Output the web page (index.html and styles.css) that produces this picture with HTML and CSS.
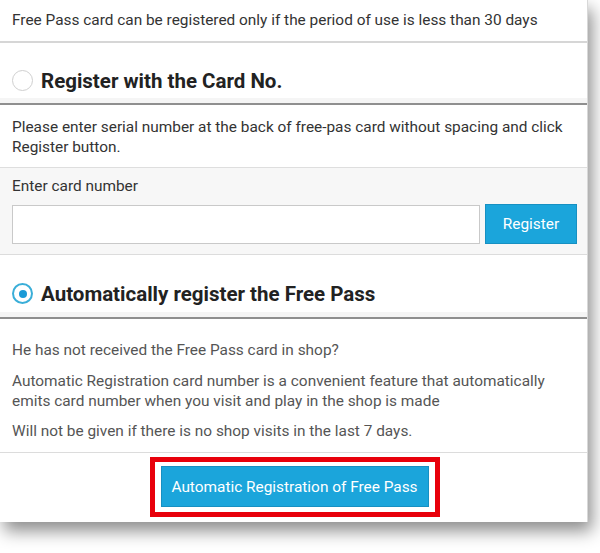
FILE: index.html
```html
<!DOCTYPE html>
<html>
<head>
<meta charset="utf-8">
<link rel="stylesheet" href="styles.css">
</head>
<body>
<div class="card">
  <div class="notice">Free Pass card can be registered only if the period of use is less than 30 days</div>
  <div class="heading">
    <span class="radio"></span>
    <h2>Register with the Card No.</h2>
  </div>
  <div class="desc">Please enter serial number at the back of free-pas card without spacing and click Register button.</div>
  <div class="form">
    <label class="label">Enter card number</label>
    <div class="row">
      <input class="input" type="text">
      <button class="btn btn-reg">Register</button>
    </div>
  </div>
  <div class="heading heading-2">
    <span class="radio checked"></span>
    <h2>Automatically register the Free Pass</h2>
  </div>
  <div class="info">
    <p>He has not received the Free Pass card in shop?</p>
    <p>Automatic Registration card number is a convenient feature that automatically emits card number when you visit and play in the shop is made</p>
    <p>Will not be given if there is no shop visits in the last 7 days.</p>
  </div>
  <div class="actions">
    <div class="highlight">
      <button class="btn btn-auto">Automatic Registration of Free Pass</button>
    </div>
  </div>
</div>
</body>
</html>
```
FILE: styles.css
```css
html, body {
  margin: 0;
  padding: 0;
  background: #ffffff;
}
body {
  font-family: Roboto, "Liberation Sans", sans-serif;
  width: 600px;
  height: 553px;
  overflow: hidden;
}
.card {
  width: 588px;
  height: 522px;
  background: #fff;
  box-shadow: 4px 9px 16px rgba(0,0,0,0.45);
  border-right: 1px solid #d8d8d8;
  box-sizing: border-box;
}
.notice {
  font-size: 15.4px;
  line-height: 20px;
  color: #333;
  padding: 10px 12px 11px;
  border-bottom: 2px solid #d6d6d6;
}
.heading {
  display: flex;
  align-items: center;
  gap: 8px;
  height: 59px;
  padding: 0 12px;
  padding-top: 1px;
  box-sizing: content-box;
  border-bottom: 2px solid #8f8f8f;
  box-shadow: inset 0 -5px 0 #f5f5f5;
}
.heading h2 {
  margin: 0;
  font-size: 20.5px;
  font-weight: 700;
  color: #222;
  line-height: 24px;
  padding-top: 14px;
}
.radio {
  width: 21px;
  height: 21px;
  border-radius: 50%;
  border: 1px solid #cfcfcf;
  box-sizing: border-box;
  margin-top: 14px;
  flex: none;
  display: flex;
  align-items: center;
  justify-content: center;
}
.radio.checked {
  border: 2px solid #3aaed8;
}
.radio.checked::after {
  content: "";
  width: 8px;
  height: 8px;
  border-radius: 50%;
  background: #1a9ad6;
}
.desc {
  font-size: 15.4px;
  line-height: 20px;
  color: #333;
  padding: 12px 12px 10px;
  border-bottom: 1px solid #dedede;
}
.form {
  background: #f7f7f7;
  padding: 8px 10px 10px 12px;
  border-bottom: 1px solid #dcdcdc;
}
.label {
  display: block;
  font-size: 15.4px;
  line-height: 20px;
  color: #333;
  margin-bottom: 8px;
}
.row {
  display: flex;
  align-items: flex-start;
  gap: 5px;
}
.input {
  width: 468px;
  height: 39px;
  box-sizing: border-box;
  border: 1px solid #c9c9c9;
  background: #fff;
  margin: 1px 0 0;
  padding: 0 8px;
}
.btn {
  font-family: Roboto, "Liberation Sans", sans-serif;
  font-size: 15.4px;
  color: #fff;
  background: #1ba5db;
  border: 1px solid #1790c2;
  cursor: pointer;
  padding: 0;
}
.btn-reg {
  width: 92px;
  height: 40px;
}
.heading-2 {
  height: 61px;
}
.info {
  padding: 21px 12px 11px;
  color: #555;
  font-size: 15.4px;
  line-height: 20px;
  border-bottom: 1px solid #dcdcdc;
}
.info p {
  margin: 0 0 11px;
}
.info p:nth-child(2) {
  margin-bottom: 10px;
}
.info p:last-child {
  margin-bottom: 0;
}
.actions {
  display: flex;
  justify-content: center;
  padding: 4px 0 5px;
}
.highlight {
  border: 5px solid #e8000b;
  padding: 4px 6px 5px;
  margin-left: 2px;
}
.btn-auto {
  width: 268px;
  height: 41px;
  display: block;
}
```
